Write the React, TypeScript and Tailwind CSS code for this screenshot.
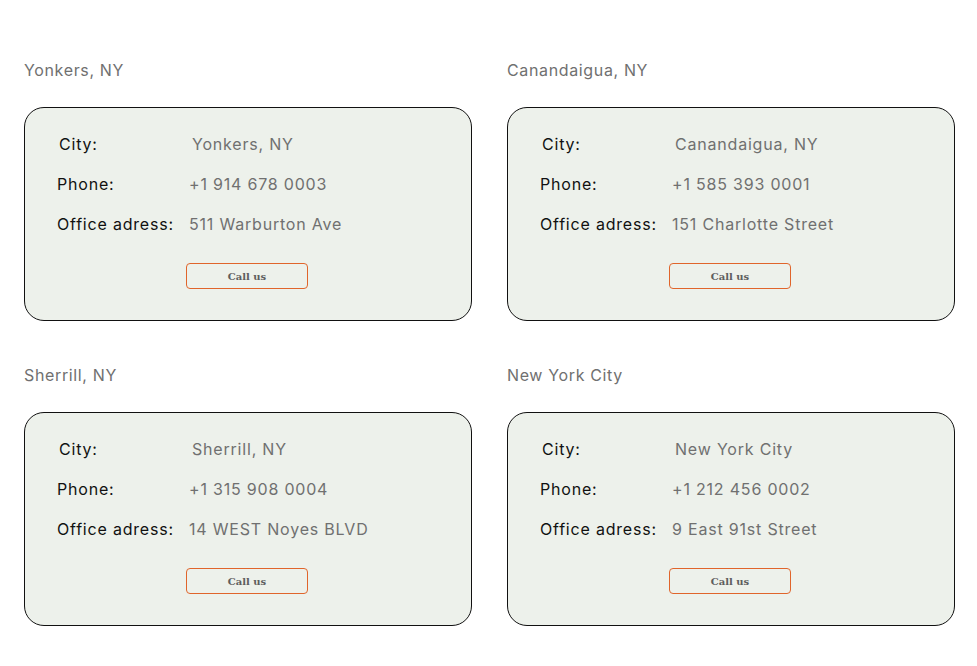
import React from "react";

const offices = [
  { title: "Yonkers, NY", phone: "+1 914 678 0003", address: "511 Warburton Ave" },
  { title: "Canandaigua, NY", phone: "+1 585 393 0001", address: "151 Charlotte Street" },
  { title: "Sherrill, NY", phone: "+1 315 908 0004", address: "14 WEST Noyes BLVD" },
  { title: "New York City", phone: "+1 212 456 0002", address: "9 East 91st Street" },
];

function Card({ title, phone, address }: { title: string; phone: string; address: string }) {
  return (
    <div className="flex flex-col">
      <div className="h-6 text-base leading-6 tracking-[0.04em] text-[#707070]">{title}</div>
      <div className="mt-[25px] h-[214px] rounded-[20px] border border-[#111] bg-[#edf1eb] pl-[32px] pt-[24px]">
        <div className="flex h-6 items-center text-base leading-6 tracking-[0.05em]">
          <div className="w-[135px] pl-[2px] text-[#111]">City:</div>
          <div className="text-[#707070]">{title}</div>
        </div>
        <div className="mt-4 flex h-6 items-center text-base leading-6 tracking-[0.05em]">
          <div className="w-[132px] text-[#111]">Phone:</div>
          <div className="text-[#707070]">{phone}</div>
        </div>
        <div className="mt-4 flex h-6 items-center text-base leading-6 tracking-[0.05em]">
          <div className="w-[132px] text-[#111]">Office adress:</div>
          <div className="text-[#707070]">{address}</div>
        </div>
        <div className="mt-[27px] flex pl-[129px]">
          <button className="flex h-[26px] w-[122px] items-center justify-center rounded-[4px] border border-[#e0652b] text-[10px] font-bold text-[#5e5e5e] [font-family:'DejaVu_Serif',serif]">
            Call us
          </button>
        </div>
      </div>
    </div>
  );
}

export default function App() {
  return (
    <div className="min-h-[666px] w-[977px] bg-white pl-[24px] pt-[58px] [font-family:Inter,sans-serif]">
      <div className="grid grid-cols-[448px_448px] gap-x-[35px] gap-y-[42px]">
        {offices.map((o) => (
          <Card key={o.title} {...o} />
        ))}
      </div>
    </div>
  );
}
